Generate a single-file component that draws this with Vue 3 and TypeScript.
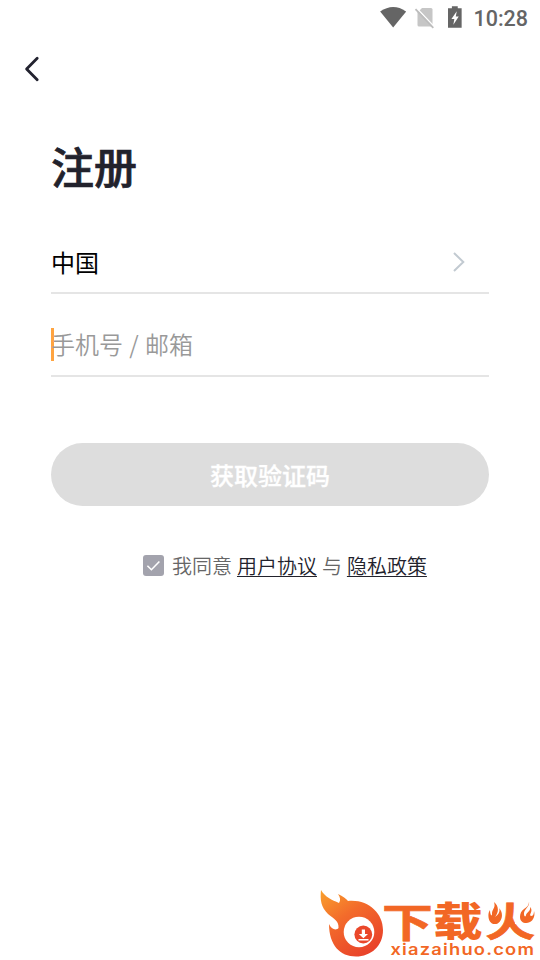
<script setup lang="ts">
import { ref } from 'vue'

const country = ref('中国')
const account = ref('')
const agreed = ref(true)
</script>

<template>
  <main class="screen">
    <header class="status">
      <svg class="wifi" viewBox="0 0 26 21"><path d="M0 4.5Q13-4.5 26 4.5L13 20.5Z" fill="#656565" /></svg>
      <svg class="sim" viewBox="0 0 20 22">
        <path d="M7 1H16Q17.500 1 17.500 2.500V19.500H4Q2.500 19.500 2.500 18V5.500Z" fill="#c6c6c6" />
        <path d="M1 .5L19.500 20" stroke="#fff" stroke-width="1.500" />
        <path d="M.5 2.200L18.300 20.900" stroke="#bdbdbd" stroke-width="1.800" />
      </svg>
      <svg class="battery" viewBox="0 0 14 22">
        <path d="M4 0H10V2H14V22H0V2H4Z" fill="#656565" />
        <path d="M9 5L3.500 13H6.500L5.500 19L11 10.500H8Z" fill="#fff" />
      </svg>
      <span class="time">10:28</span>
    </header>
    <nav class="nav">
      <button class="back" aria-label="返回">
        <svg viewBox="0 0 16 26"><path d="M13.200 2.200L2.600 13L13.200 23.800" fill="none" stroke="#22222f" stroke-width="2.800" stroke-linecap="round" stroke-linejoin="round" /></svg>
      </button>
    </nav>
    <section class="form">
      <h1>注册</h1>
      <div class="field country">
        <span>{{ country }}</span>
        <svg viewBox="0 0 14 22"><path d="M2 2L11.300 11L2 20" fill="none" stroke="#c2cad1" stroke-width="2" /></svg>
      </div>
      <div class="field account">
        <i class="caret"></i>
        <span>{{ account || '手机号 / 邮箱' }}</span>
      </div>
      <button class="submit">获取验证码</button>
      <div class="agreement">
        <span class="check" @click="agreed = !agreed">
          <svg v-if="agreed" viewBox="0 0 21 21"><path d="M4.400 10.800L8.400 14.700L16.400 6.500" fill="none" stroke="#fff" stroke-width="1.600" /></svg>
        </span>
        <span class="terms">我同意 <a>用户协议</a> 与 <a>隐私政策</a></span>
      </div>
    </section>
    <footer class="brand">
      <svg viewBox="316 888 224 72">
        <defs>
          <linearGradient id="flame" x1="0" y1="0" x2=".65" y2="1">
            <stop offset="0" stop-color="#f9a12d" />
            <stop offset=".45" stop-color="#f36b2b" />
            <stop offset="1" stop-color="#e9432a" />
          </linearGradient>
        </defs>
        <path d="M321 890C325 897 332 900 339 903C341 900 340 897 338 894C343 896 346 899 348 901C368 899 383 913 383 930C383 946 371 956.500 356 956.500C340 956.500 329 945 329 924C331 929 336 931 338.500 928C339 921 334 919 328 914C321 907 320 900 321 890Z" fill="url(#flame)" />
        <circle cx="359" cy="932" r="15.300" fill="#fff" />
        <circle cx="363.300" cy="934.500" r="8.900" fill="#ea472a" />
        <path d="M361.800 929.500H365V934H368L363.400 938.300L358.800 934H361.800ZM358.500 939H368.500V940.500H358.500Z" fill="#fff" />
        <g class="name">
          <text class="light" transform="translate(382 936.800) scale(1.270 1)">下</text>
          <text transform="translate(433 936.300) scale(1.240 1)">载</text>
          <text class="light" transform="translate(485 936.300) scale(1.260 1)">火</text>
        </g>
        <path d="M486 899H503V924H486ZM515 899H537V924H515Z" fill="#fff" />
        <path d="M494 902C499 906 499 912 495 917C500 914 500 910 499 908C505 914 501 924 495 924C488 924 487 914 490 910C490 915 492 917 492 914C492 909 496 908 494 902ZM529 902C530 907 524 909 524 914C524 917 526 917 526 915C527 912 531 911 530 907C534 911 528 915 531 916C533 916 534 914 534 911C536 918 531 924 525 923C518 922 519 912 524 909C527 907 529 905 529 902Z" fill="#f26725" />
        <text class="domain" transform="translate(390.500 955) scale(1.180 1)" textLength="121.500" lengthAdjust="spacing">xiazaihuo.com</text>
      </svg>
    </footer>
  </main>
</template>

<style>
body { background: #fff; }
</style>

<style scoped>
* { box-sizing: border-box; }
.screen { width: 540px; height: 960px; display: flex; flex-direction: column; background: #fff; overflow: hidden; font-family: "Noto Sans CJK SC", sans-serif; color: #22222c; }
svg { display: block; }
button { border: 0; padding: 0; font-family: inherit; }
.status { height: 36px; display: flex; align-items: flex-start; padding: 6px 12px 0 380px; }
.wifi { width: 27px; height: 21px; margin-top: 1px; }
.sim { width: 20px; height: 22px; margin: 1px 0 0 9px; overflow: visible; }
.battery { width: 14px; height: 22px; margin-left: 13px; }
.time { margin-left: 11.500px; font: 500 21.500px/25px Roboto, sans-serif; color: #656565; white-space: nowrap; }
.nav { height: 68px; padding: 20px 0 0 24px; }
.back { background: none; display: block; }
.back svg { width: 16px; height: 26px; }
.form { padding: 0 51px; }
h1 { margin: 30px 0 0; font-size: 43px; line-height: 62px; font-weight: 500; -webkit-text-stroke: .7px #22222c; height: 64px; }
.field { display: flex; align-items: center; border-bottom: 2px solid #e5e5e5; font-size: 24px; line-height: 34px; word-spacing: 1px; }
.country { height: 62px; margin-top: 34px; color: #000; justify-content: space-between; padding-right: 23px; }
.country svg { width: 14px; height: 22px; }
.account { height: 83px; color: #999; padding-top: 19px; }
.account span { font-weight: 350; }
.caret { width: 3px; height: 33px; margin-right: -3px; background: #ffa440; }
.submit { display: block; width: 438px; height: 63px; margin-top: 66px; border-radius: 32px; background: #ddd; color: #fff; font-size: 24px; font-weight: 500; -webkit-text-stroke: .3px #fff; line-height: 63px; }
.agreement { display: flex; align-items: center; margin: 43px 0 0 92px; height: 32px; font-size: 20px; line-height: 30px; color: #666; white-space: nowrap; word-spacing: .5px; font-weight: 350; }
.terms { position: relative; top: 1px; }
.check { width: 21px; height: 21px; margin-right: 8px; border-radius: 3px; background: #a3a3ad; }
.check svg { width: 21px; height: 21px; }
.agreement a { color: #22222c; text-decoration: underline; text-decoration-thickness: 1px; text-underline-offset: 2px; }
.brand { margin-top: auto; align-self: flex-end; width: 224px; height: 72px; }
.brand svg { width: 224px; height: 72px; }
.name { font-family: "Liberation Sans", "Noto Sans CJK SC", sans-serif; font-size: 40px; font-weight: 900; fill: #f26725; }
.light { font-weight: 700; stroke: #f26725; stroke-width: .6px; }
.domain { font: 600 15.500px Inter, sans-serif; fill: #f26725; }
</style>
